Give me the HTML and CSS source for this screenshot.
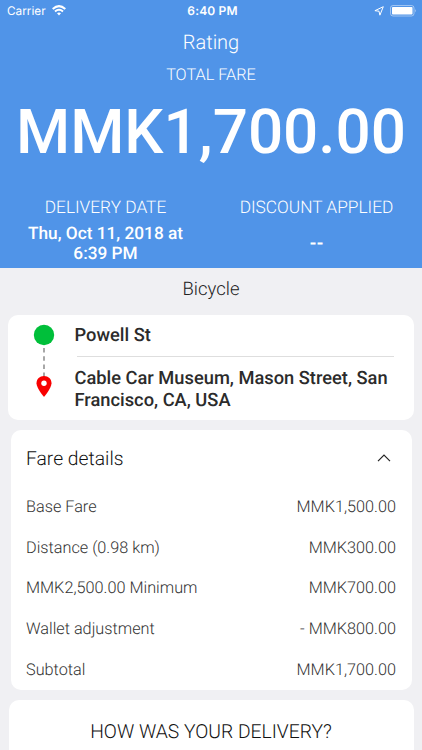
FILE: index.html
```html
<!DOCTYPE html>
<html lang="en">
<head>
<meta charset="utf-8">
<title>Rating</title>
<link rel="stylesheet" href="styles.css">
</head>
<body>
<header class="hero">
  <div class="status">
    <div class="carrier"><span>Carrier</span>
      <svg width="14" height="11" viewBox="0 0 14 11" fill="none" stroke="#fff" stroke-width="2"><path d="M.7 4Q7 -1.800 13.300 4M3 6.500Q7 3 11 6.500"/><path d="M5 8.300Q7 6.700 9 8.300L7 10.500Z" fill="#fff" stroke="none"/></svg>
    </div>
    <span class="time">6:40 PM</span>
    <div class="indicators">
      <svg width="10" height="10" viewBox="0 0 10 10" fill="none" stroke="#fff" stroke-width="1"><path d="M9.300 .7L.9 4.700L5 5.200L5.900 9.200Z"/></svg>
      <svg width="27" height="12" viewBox="0 0 27 12"><rect x=".5" y=".5" width="23.500" height="10.500" rx="2.500" fill="none" stroke="#fff" stroke-opacity=".45"/><rect x="2" y="2" width="20.500" height="7.500" rx=".8" fill="#fff"/><path d="M25 4Q26.800 5.700 25 7.500Z" fill="#fff" fill-opacity=".5"/></svg>
    </div>
  </div>
  <h1 class="title">Rating</h1>
  <p class="total-label">TOTAL FARE</p>
  <p class="total">MMK1,700.00</p>
  <div class="facts">
    <div class="fact"><h2>DELIVERY DATE</h2><p>Thu, Oct 11, 2018 at<br>6:39 PM</p></div>
    <div class="fact"><h2>DISCOUNT APPLIED</h2><p class="none">--</p></div>
  </div>
</header>
<main>
  <h2 class="vehicle">Bicycle</h2>
  <section class="card route">
    <div class="markers">
      <svg width="22" height="74" viewBox="0 0 22 74"><path d="M11 24V53" stroke="#999" stroke-width="1.700" stroke-dasharray="4.500 3.700"/><circle cx="11" cy="11" r="10.200" fill="#00bf3a"/><path d="M11 52C6.700 52 3.500 55 3.500 59.300C3.500 64.500 11 73 11 73S18.500 64.500 18.500 59.300C18.500 55 15.300 52 11 52Z" fill="#f80000"/><circle cx="11" cy="59.300" r="2.700" fill="#fff"/></svg>
    </div>
    <div class="stops"><p class="from">Powell St</p><p class="to">Cable Car Museum, Mason Street, San<br>Francisco, CA, USA</p></div>
  </section>
  <section class="card fare">
    <div class="fare-head"><h2>Fare details</h2><svg width="14" height="8" viewBox="0 0 14 8" fill="none" stroke="#222" stroke-width="1.200"><path d="M1 7.200L7 1L13 7.200"/></svg></div>
    <dl>
      <div><dt>Base Fare</dt><dd>MMK1,500.00</dd></div>
      <div><dt>Distance (0.98 km)</dt><dd>MMK300.00</dd></div>
      <div><dt>MMK2,500.00 Minimum</dt><dd>MMK700.00</dd></div>
      <div><dt>Wallet adjustment</dt><dd>- MMK800.00</dd></div>
      <div><dt>Subtotal</dt><dd>MMK1,700.00</dd></div>
    </dl>
  </section>
  <section class="card feedback"><h2>HOW WAS YOUR DELIVERY?</h2></section>
</main>
</body>
</html>
```
FILE: styles.css
```css
* { box-sizing: border-box; }
body { margin: 0; width: 422px; height: 750px; overflow: hidden; background: #f0f0f3; font-family: Roboto, sans-serif; color: #222; text-rendering: geometricPrecision; }
h1, h2, p, dl, dd { margin: 0; font-weight: 400; }
svg { display: block; overflow: visible; }
.hero { height: 268px; background: #5094e8; color: #fff; text-align: center; }
.status { height: 22px; display: grid; grid-template-columns: 1fr auto 1fr; align-items: center; padding: 0 5px 0 7px; font: 11.800px/22px Inter, sans-serif; }
.carrier { display: flex; align-items: center; gap: 6px; }
.carrier svg { margin-top: -1px; }
.time { font-weight: 600; font-size: 12px; letter-spacing: .15px; padding-left: 1px; }
.indicators { display: flex; align-items: center; justify-content: flex-end; gap: 6px; }
.indicators svg { margin-top: -1px; }
.title { font-size: 20px; line-height: 24px; margin-top: 8px; font-weight: 300; }
.total-label { font-size: 16.300px; line-height: 20px; margin-top: 11px; font-weight: 300; }
.total { font-size: 62px; line-height: 76px; margin-top: 10px; font-weight: 500; white-space: nowrap; }
.facts { display: grid; grid-template-columns: 1fr 1fr; margin-top: 26px; }
.fact h2 { font-size: 17.300px; line-height: 22px; font-weight: 300; }
.fact p { font-size: 17.250px; line-height: 20px; font-weight: 500; margin-top: 5px; }
.fact .none { margin-top: 15px; font-weight: 700; font-size: 18px; }
.vehicle { height: 47px; font-size: 18.500px; line-height: 43px; text-align: center; font-weight: 300; }
.card { background: #fff; border-radius: 10px; }
.route { height: 105px; margin: 0 8.500px 0 8px; display: flex; padding: 9px 20px 0 25px; }
.markers { width: 41.500px; }
.stops { flex: 1; font-size: 18.300px; line-height: 21.500px; white-space: nowrap; color: #2b2b2b; }
.from { height: 32.500px; margin-left: 2px; padding-top: 1px; border-bottom: 1px solid #dedede; text-indent: -2px; }
.to { padding-top: 11.500px; }
.stops p { font-weight: 500; }
.fare { height: 260px; margin: 10px 10.500px 0; padding: 0 15.500px; }
.fare-head { height: 56px; display: flex; align-items: center; justify-content: space-between; padding-right: 5.500px; }
.fare h2 { font-size: 19.300px; font-weight: 300; color: #111; }
dl div { height: 40.750px; display: flex; justify-content: space-between; align-items: center; font-size: 16.250px; font-weight: 300; color: #333; }
dd { font-weight: 300; }
.feedback { height: 70px; margin: 10px 8.500px 0; padding-top: 20px; text-align: center; }
.feedback h2 { font-size: 19.300px; line-height: 24px; font-weight: 300; color: #111; }
```
